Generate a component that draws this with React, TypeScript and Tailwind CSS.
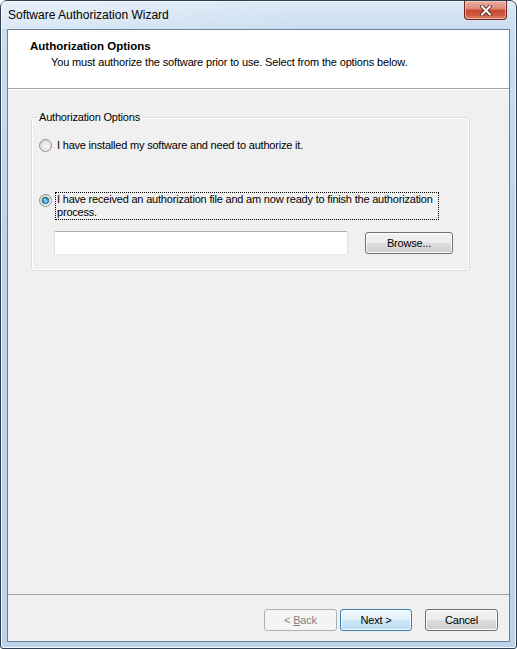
import React from "react";

function Radio({ checked = false }: { checked?: boolean }) {
  const id = checked ? "rb-on" : "rb-off";
  return (
    <svg width="13" height="13" viewBox="0 0 13 13" className="shrink-0 block">
      <defs>
        <linearGradient id={`${id}-ring`} x1="0" y1="0" x2="1" y2="1">
          <stop offset="0" stopColor="#cfcfcf" />
          <stop offset="1" stopColor="#ffffff" />
        </linearGradient>
        <linearGradient id={`${id}-core`} x1="0" y1="0" x2="1" y2="1">
          <stop offset="0" stopColor="#e2e2e2" />
          <stop offset="1" stopColor="#fbfbfb" />
        </linearGradient>
        <radialGradient id={`${id}-dot`} cx="0.55" cy="0.6" r="0.6">
          <stop offset="0" stopColor="#8edbf9" />
          <stop offset="0.55" stopColor="#3a9fd3" />
          <stop offset="1" stopColor="#14507d" />
        </radialGradient>
      </defs>
      <circle cx="6.5" cy="6.5" r="6" fill={`url(#${id}-ring)`} stroke="#8e8f8f" strokeWidth="1" />
      <circle cx="6.5" cy="6.5" r="4.2" fill={`url(#${id}-core)`} stroke="#d3d3d3" strokeWidth="0.6" />
      {checked && (
        <>
          <circle cx="6.5" cy="6.5" r="3.3" fill={`url(#${id}-dot)`} stroke="#1b4f78" strokeWidth="0.6" />
          <ellipse cx="5.6" cy="5.4" rx="1.3" ry="0.9" fill="#ffffff" opacity="0.55" />
        </>
      )}
    </svg>
  );
}

function CloseGlyph() {
  return (
    <svg width="12" height="11" viewBox="0 0 12 11" className="block">
      <path d="M2 1.5 L10 9.5 M10 1.5 L2 9.5" stroke="#4a1a12" strokeWidth="3.6" strokeLinecap="square" />
      <path d="M2 1.5 L10 9.5 M10 1.5 L2 9.5" stroke="#ffffff" strokeWidth="2" strokeLinecap="square" />
    </svg>
  );
}

function Button({
  children,
  variant = "normal",
  className = "",
}: {
  children: React.ReactNode;
  variant?: "normal" | "default" | "disabled";
  className?: string;
}) {
  const look =
    variant === "default"
      ? "border-[#3c7fb1] bg-[linear-gradient(180deg,#eef7fd_0%,#e2f1fb_50%,#cde7f8_50%,#bcdcf2_100%)] text-black shadow-[inset_0_0_0_1px_#f5fbff]"
      : variant === "disabled"
      ? "border-[#adb2b5] bg-[#f4f4f4] text-[#838383]"
      : "border-[#707070] bg-[linear-gradient(180deg,#f2f2f2_0%,#ebebeb_50%,#dddddd_50%,#cfcfcf_100%)] text-black shadow-[inset_0_0_0_1px_#fcfcfc]";
  return (
    <div
      className={`flex h-[22px] items-center justify-center rounded-[3px] border text-[11px] leading-[13px] tracking-[-0.2px] ${look} ${className}`}
    >
      <span className="whitespace-pre">{children}</span>
    </div>
  );
}

export default function App() {
  return (
    <div className="h-[649px] w-[517px] overflow-hidden bg-white font-['Liberation_Sans',Arial,sans-serif]">
      <div className="flex h-[649px] w-[517px] flex-col rounded-t-[7px] rounded-b-[3px] border border-[#2f3f52] bg-[linear-gradient(180deg,#dce9f6_0px,#cadef1_28px,#bfd5ec_200px,#bcd3ea_100%)] shadow-[inset_0_0_0_1px_#eef5fc]">
        {/* title bar */}
        <div className="flex h-[28px] shrink-0 items-start justify-between pl-[7px] pr-[9px] bg-[linear-gradient(90deg,rgba(255,255,255,0.35)_0%,rgba(255,255,255,0)_60%)]">
          <div className="pt-[7px] text-[12px] leading-[15px] text-black">
            Software Authorization Wizard
          </div>
          <div className="flex h-[19px] w-[43px] items-center justify-center rounded-b-[4px] border border-t-0 border-[#6f271c] bg-[linear-gradient(180deg,#eab0a4_0%,#dc8575_45%,#c7462f_50%,#cf5a43_80%,#e08c70_100%)] shadow-[inset_0_0_0_1px_rgba(255,220,210,0.55)]">
            <CloseGlyph />
          </div>
        </div>

        {/* client area */}
        <div className="mx-[6px] mb-[6px] flex flex-1 flex-col border border-[#6d8196] bg-[#f0f0f0]">
          {/* header */}
          <div className="h-[58px] shrink-0 bg-white pl-[22px] pt-[10px]">
            <div className="text-[11.5px] font-bold leading-[13px] text-black">
              Authorization Options
            </div>
            <div className="mt-[3px] pl-[21px] text-[11px] leading-[13px] tracking-[-0.15px] text-black">
              You must authorize the software prior to use. Select from the options below.
            </div>
          </div>
          <div className="h-px shrink-0 bg-[#a0a0a0]" />
          <div className="h-px shrink-0 bg-white" />

          {/* body */}
          <div className="flex-1 pl-[23px] pt-[21px]">
            <fieldset className="w-[439px] rounded-[3px] border border-[#d5dfe5] pb-[15px] shadow-[inset_0_0_0_1px_#ffffff]">
              <legend className="ml-[6px] px-[1px] text-[11px] leading-[13px] tracking-[-0.2px] text-black">
                Authorization Options
              </legend>

              <div className="mt-[15px] flex items-center gap-[5px] pl-[7px] text-[11px] leading-[13px] tracking-[-0.2px] text-black">
                <Radio />
                <span>I have installed my software and need to authorize it.</span>
              </div>

              <div className="mt-[40px] flex items-start gap-[3px] pl-[7px] text-[11px] leading-[13px] tracking-[-0.2px] text-black">
                <div className="pt-[2px]">
                  <Radio checked />
                </div>
                <div className="w-[384px] border border-dotted border-black pl-[1px]">
                  I have received an authorization file and am now ready to finish the authorization
                  <br />
                  process.
                </div>
              </div>

              <div className="mt-[11px] flex items-center pl-[22px]">
                <div className="h-[24px] w-[294px] rounded-[2px] border border-[#e3e9ef] border-t-[#abadb3] border-l-[#dbdfe6] border-r-[#dbdfe6] bg-white" />
                <Button className="ml-[17px] w-[88px]">Browse...</Button>
              </div>
            </fieldset>
          </div>

          {/* footer */}
          <div className="h-px shrink-0 bg-[#a0a0a0]" />
          <div className="flex h-[46px] shrink-0 items-start justify-end pr-[11px] pt-[14px]">
            <Button variant="disabled" className="w-[73px]">
              {"< "}
              <span className="underline">B</span>
              {"ack"}
            </Button>
            <Button variant="default" className="ml-[3px] w-[72px]">
              {"Next >"}
            </Button>
            <Button className="ml-[13px] w-[73px]">Cancel</Button>
          </div>
        </div>
      </div>
    </div>
  );
}
